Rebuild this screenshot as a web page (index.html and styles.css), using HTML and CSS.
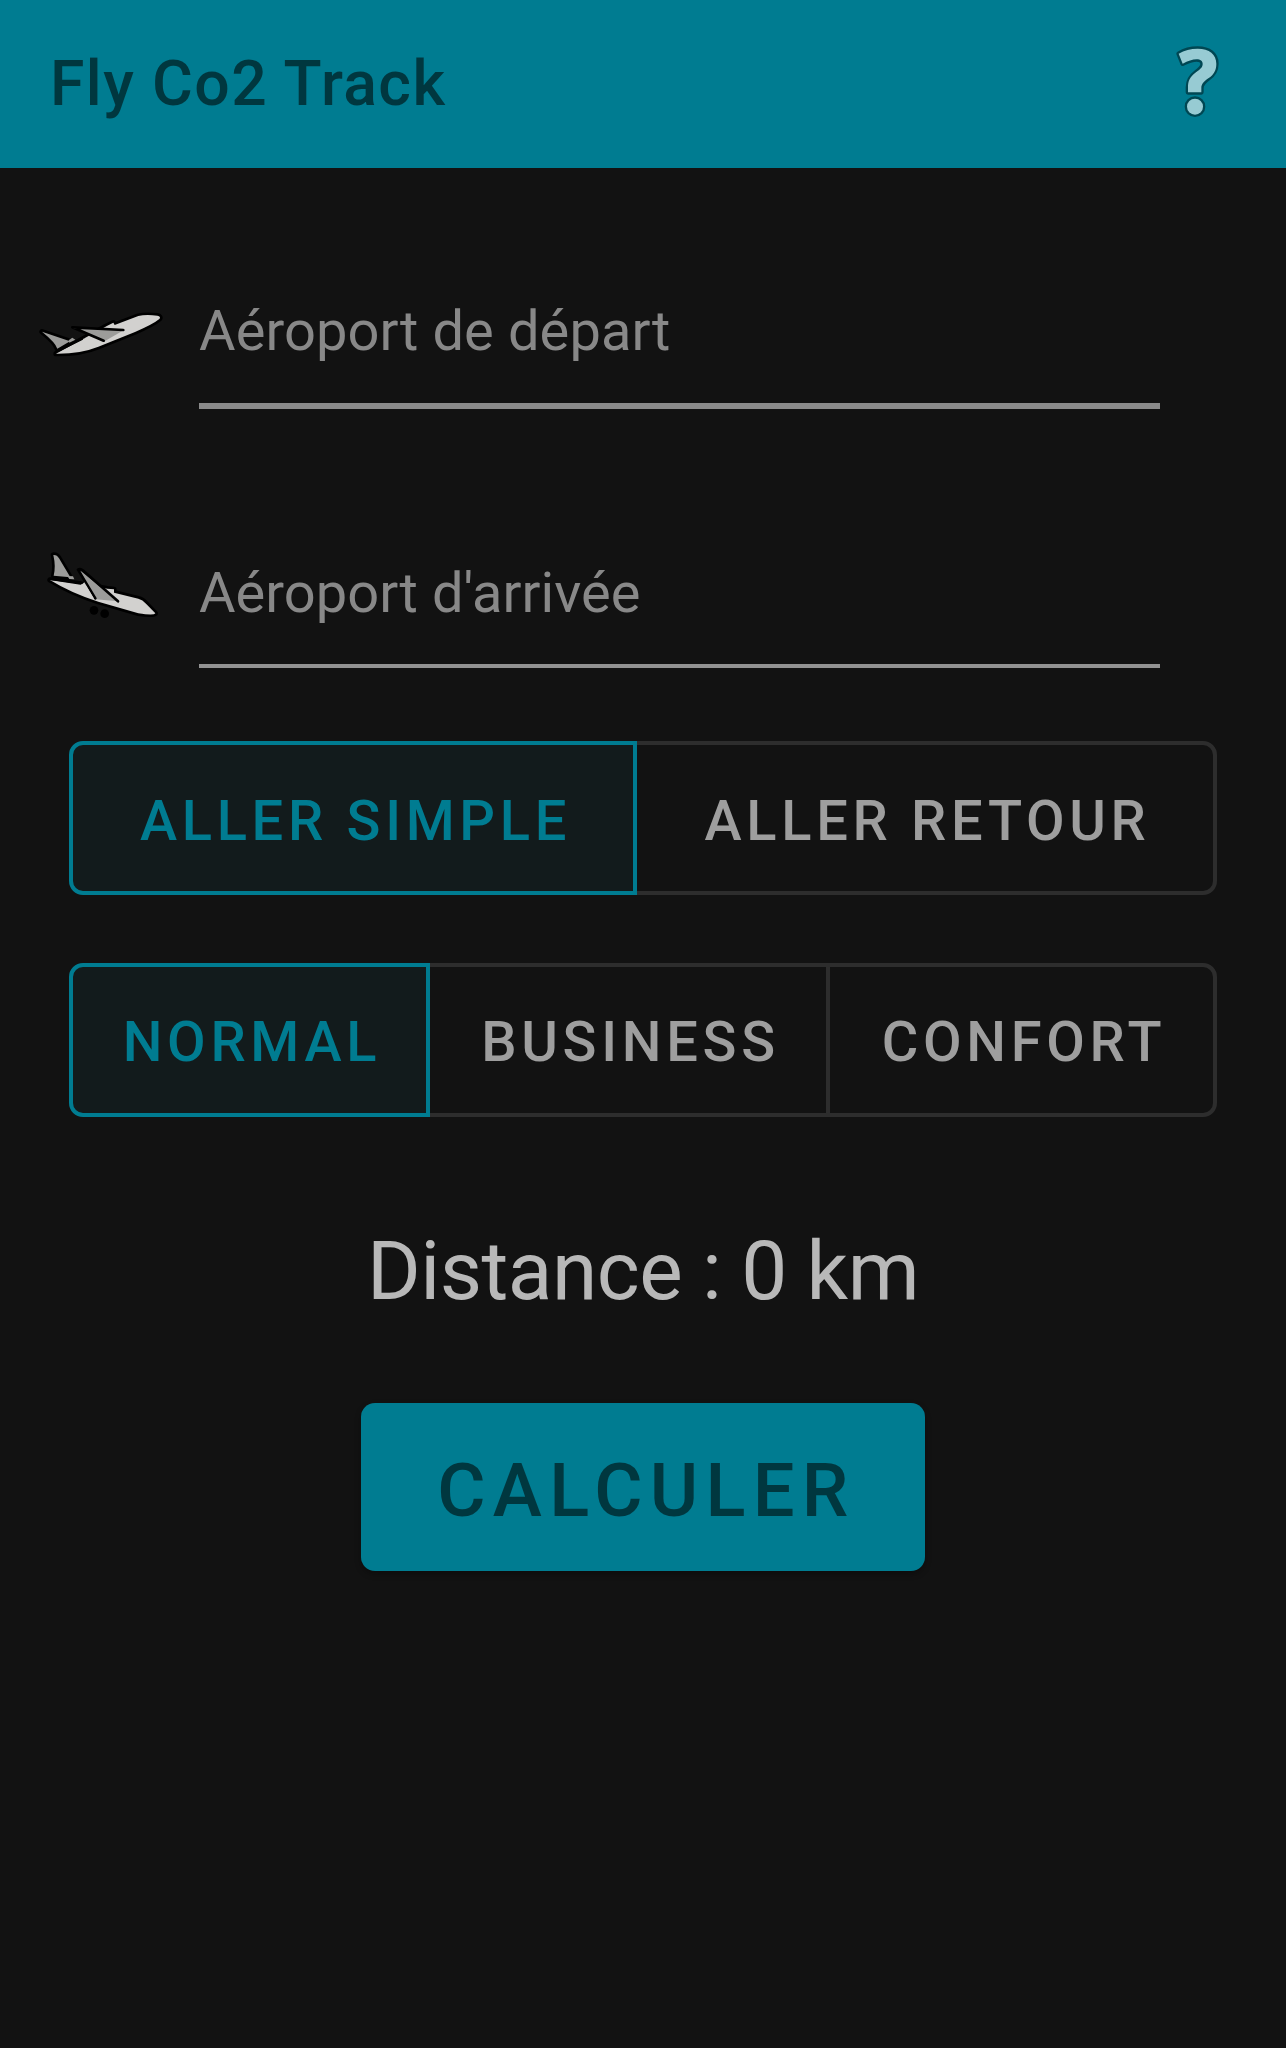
FILE: index.html
```html
<!DOCTYPE html>
<html lang="fr">
<head>
<meta charset="utf-8">
<title>Fly Co2 Track</title>
<link rel="stylesheet" href="styles.css">
</head>
<body>
<header class="app-bar">
  <h1 class="app-title">Fly Co2 Track</h1>
  <svg class="help-icon" viewBox="102 66 144 228" aria-label="Aide">
    <g fill="#97cbd3" stroke="#004753" stroke-width="14" stroke-linejoin="round" paint-order="stroke">
      <path d="M119 98C136 88 155 83 176 83C211 83 232 100 232 128C232 148 225 160 208 172C193 183 187 190 187 201V214H147V199C147 180 152 168 171 154C186 143 191 138 191 129C191 120 184 115 173 115C160 115 147 120 131 128Z"/>
      <circle cx="168" cy="257" r="24"/>
    </g>
  </svg>
</header>
<main class="content">
  <div class="field">
    <svg class="plane-up" viewBox="24 60 378 141">
      <g stroke="#000" stroke-width="16" stroke-linejoin="round" stroke-linecap="round" paint-order="stroke">
        <path fill="#9c9c9a" d="M36 125L120 154L82 176Q77 158 36 125Z"/>
        <path fill="#d2d1cf" d="M78 191L166 143L232 107L250 98L254 105L325 78Q347 73 382 77Q394 80 388 87Q370 102 315 126L205 170Q150 192 78 191Z"/>
      </g>
      <path fill="#9c9c9a" d="M130 115L282 120L221 155Z"/>
      <path fill="none" stroke="#000" stroke-width="8" stroke-linejoin="round" stroke-linecap="round" d="M280 120L127 112L221 152M84 182L160 144"/>
      <path fill="#d2d1cf" d="M160 146L180 142L214 157L200 169L150 172Z"/>
      <path fill="#9c9c9a" d="M116 151L127 143L136 149L118 158Z"/>
    </svg>
    <div class="input input-focus">Aéroport de départ</div>
  </div>
  <div class="field field-arrival">
    <svg class="plane-down" viewBox="51 60 336 210">
      <g stroke="#000" stroke-width="16" stroke-linejoin="round" stroke-linecap="round" paint-order="stroke">
        <path fill="#9c9c9a" d="M70 75Q81 74 87 85L121 142L71 137Q78 110 70 75Z"/>
        <path fill="#d2d1cf" d="M60 150L154 162L232 176L252 178V188L325 206Q338 209 348 221L376 250Q372 257 325 250L205 215Q125 190 60 150Z"/>
      </g>
      <path fill="#9c9c9a" d="M149 120L264 214L196 208Z"/>
      <path fill="none" stroke="#000" stroke-width="8" stroke-linejoin="round" stroke-linecap="round" d="M264 214L165 127Q153 114 144 119L196 205M64 147L152 160"/>
      <path fill="#d2d1cf" d="M155 164L163 157L192 206L160 197Z"/>
      <path fill="#9c9c9a" d="M112 138L129 139L133 148L118 147Z"/>
      <circle cx="192" cy="241" r="13"/>
      <circle cx="224" cy="251" r="13"/>
    </svg>
    <div class="input">Aéroport d'arrivée</div>
  </div>
  <div class="toggle toggle-trip">
    <button class="seg selected">ALLER SIMPLE</button>
    <button class="seg">ALLER RETOUR</button>
  </div>
  <div class="toggle toggle-class">
    <button class="seg selected">NORMAL</button>
    <button class="seg">BUSINESS</button>
    <button class="seg">CONFORT</button>
  </div>
  <p class="distance">Distance : 0 km</p>
  <button class="submit">CALCULER</button>
</main>
</body>
</html>
```
FILE: styles.css
```css
* { box-sizing: border-box; }

body {
  margin: 0;
  min-height: 2048px;
  background: #121212;
  font-family: Roboto, "Liberation Sans", sans-serif;
}

button {
  margin: 0;
  font-family: inherit;
  font-weight: 500;
}

svg { overflow: visible; }

.app-bar {
  display: flex;
  align-items: center;
  justify-content: space-between;
  height: 168px;
  padding: 0 65px 4px 50px;
  background: #007c91;
}

.app-title {
  margin: 0;
  padding-top: 3px;
  color: #00373f;
  font-size: 62.5px;
  font-weight: 500;
  letter-spacing: 1.4px;
}

.help-icon {
  width: 48px;
  height: 76px;
  margin-bottom: 3px;
}

.content {
  display: flex;
  flex-direction: column;
  align-items: center;
  padding-top: 125px;
}

.field {
  display: flex;
  align-items: flex-start;
  width: 100%;
  height: 116px;
}

.plane-up {
  width: 126px;
  height: 47px;
  margin: 17px 35px 0 38px;
}

.plane-down {
  width: 112px;
  height: 70px;
  margin: 0 40px 0 47px;
}

.field-arrival {
  height: 118px;
  margin-top: 141px;
}

.input {
  width: 961px;
  height: 116px;
  border-bottom: 4px solid #929292;
  color: #888;
  font-size: 56px;
  line-height: 77px;
  letter-spacing: 0.1px;
}

.field-arrival .input {
  height: 118px;
  line-height: 86px;
  letter-spacing: 0.04px;
}

.input-focus { border-bottom: 6px solid #8a8a8a; }

.toggle {
  display: flex;
  width: 1148px;
  height: 154px;
}

.toggle-trip { margin-top: 73px; }

.toggle-class { margin-top: 68px; }

.seg {
  flex: none;
  margin-left: -4px;
  padding: 5px 0 0 5px;
  border: 4px solid #2d2d2d;
  background: transparent;
  color: #9e9e9e;
  font-size: 56px;
  letter-spacing: 4.7px;
}

.toggle-class .seg { padding-top: 4px; }

.seg:first-child {
  margin-left: 0;
  border-radius: 14px 0 0 14px;
}

.seg:last-child {
  flex: 1;
  border-radius: 0 14px 14px 0;
}

.seg.selected {
  z-index: 1;
  border-color: #007c91;
  background: #121b1c;
  color: #007c91;
}

.toggle-trip .selected { width: 568px; }

.toggle-class .selected { width: 361px; }

.toggle-class .seg:nth-child(2) { width: 404px; }

.distance {
  margin: 106px 0 0;
  color: #b8b8b8;
  font-size: 82px;
  line-height: 96px;
  letter-spacing: -0.5px;
}

.submit {
  width: 564px;
  height: 168px;
  margin-top: 84px;
  padding: 6px 0 0 7px;
  border: 0;
  border-radius: 14px;
  background: #007c91;
  box-shadow: 0 3px 6px rgba(0, 0, 0, 0.3);
  color: #00373f;
  font-size: 74px;
  letter-spacing: 7.3px;
}
```
